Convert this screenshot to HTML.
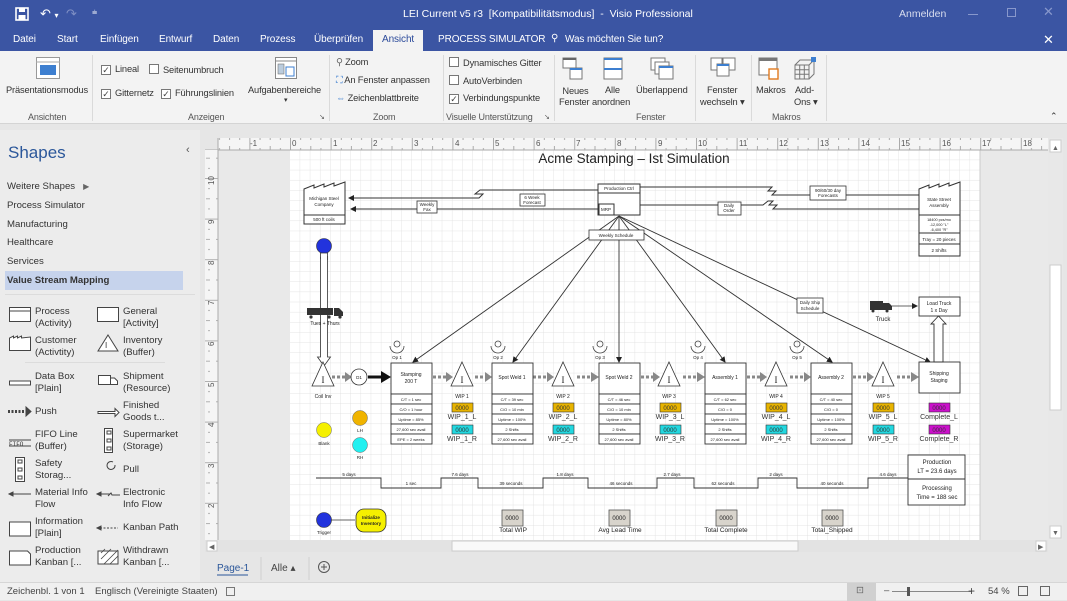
<!DOCTYPE html>
<html><head><meta charset="utf-8">
<style>
*{margin:0;padding:0;box-sizing:border-box}
body{width:1067px;height:600px;overflow:hidden;background:#e6e6e6;font-family:"Liberation Sans",sans-serif;font-size:10px;color:#333;position:relative}
.a{position:absolute;white-space:nowrap}
#title{left:0;top:0;width:1067px;height:30px;background:#3b55a3}
#tabs{left:0;top:30px;width:1067px;height:21px;background:#3b55a3}
#tabs .a{font-size:10px !important;letter-spacing:-0.1px}
.w{color:#fff}
#ribbon{left:0;top:51px;width:1067px;height:73px;background:#f3f3f3;border-bottom:1px solid #d4d4d4;font-size:9.3px;letter-spacing:-0.15px}
.cb{display:inline-block;width:10px;height:10px;border:1px solid #777;background:#fff;vertical-align:-1px;margin-right:4px;font-size:9px;line-height:8px;text-align:center;color:#444}
.sep{position:absolute;top:4px;width:1px;height:66px;background:#dadada}
.gl{color:#555;font-size:9px}
#shapes{left:0;top:130px;width:200px;height:452px;background:#ececec;font-size:9.6px}
#status{left:0;top:582px;width:1067px;height:18px;background:#f0f0f0;border-top:1px solid #d6d6d6}
.si{font-size:9.5px;color:#444}
</style></head><body>
<div class="a" id="title">
 <svg class="a" style="left:15px;top:7px" width="14" height="14"><rect x="1" y="1" width="12" height="12" fill="none" stroke="#fff" stroke-width="1.6"/><rect x="4" y="1" width="6" height="4" fill="#fff"/><rect x="3.5" y="8" width="7" height="5" fill="#fff"/></svg>
 <div class="a w" style="left:40px;top:6px;font-size:13px">↶ <span style="font-size:8px">▾</span></div>
 <div class="a" style="left:66px;top:6px;font-size:13px;color:#7f8fc4">↷</div>
 <div class="a w" style="left:92px;top:7px;font-size:9px">⩧</div>
 <div class="a w" style="left:403px;top:8px;font-size:10.5px">LEI Current v5 r3 &nbsp;[Kompatibilitätsmodus] &nbsp;- &nbsp;Visio Professional</div>
 <div class="a w" style="left:899px;top:8px;font-size:10.5px;color:#d8ddee">Anmelden</div>
 <div class="a" style="left:968px;top:14px;width:10px;height:1px;background:#8898cc"></div>
 <div class="a" style="left:1007px;top:8px;width:9px;height:9px;border:1px solid #8898cc"></div>
 <div class="a" style="left:1043px;top:4px;color:#8898cc;font-size:13px">✕</div>
</div>
<div class="a" id="tabs">
 <div class="a w" style="left:13px;top:4px">Datei</div>
 <div class="a w" style="left:57px;top:4px">Start</div>
 <div class="a w" style="left:100px;top:4px">Einfügen</div>
 <div class="a w" style="left:159px;top:4px">Entwurf</div>
 <div class="a w" style="left:213px;top:4px">Daten</div>
 <div class="a w" style="left:260px;top:4px">Prozess</div>
 <div class="a w" style="left:314px;top:4px">Überprüfen</div>
 <div class="a" style="left:373px;top:0;width:50px;height:21px;background:#f3f3f3;color:#2b4a9a;padding:4px 0 0 9px">Ansicht</div>
 <div class="a w" style="left:438px;top:4px">PROCESS SIMULATOR</div>
 <div class="a w" style="left:551px;top:3px">⚲</div>
 <div class="a w" style="left:565px;top:4px">Was möchten Sie tun?</div>
 <div class="a w" style="left:1043px;top:2px;font-size:13px !important">✕</div>
</div>
<div class="a" id="ribbon">
 <svg class="a" style="left:36px;top:6px" width="24" height="22"><rect x="0.5" y="0.5" width="23" height="21" fill="#fff" stroke="#999"/><line x1="0" y1="5" x2="24" y2="5" stroke="#aaa"/><rect x="4" y="8" width="16" height="10" fill="#3d7fd0"/></svg>
 <div class="a" style="left:6px;top:34px">Präsentationsmodus</div>
 <div class="a gl" style="left:28px;top:61px">Ansichten</div>
 <div class="sep" style="left:92px"></div>
 <div class="a" style="left:101px;top:13px"><span class="cb">✓</span>Lineal</div>
 <div class="a" style="left:149px;top:13px"><span class="cb"></span>Seitenumbruch</div>
 <div class="a" style="left:101px;top:37px"><span class="cb">✓</span>Gitternetz</div>
 <div class="a" style="left:161px;top:37px"><span class="cb">✓</span>Führungslinien</div>
 <svg class="a" style="left:275px;top:6px" width="22" height="22"><rect x="0.5" y="0.5" width="21" height="21" fill="#fff" stroke="#888"/><line x1="0" y1="4" x2="22" y2="4" stroke="#888"/><rect x="3" y="7" width="6" height="10" fill="#bcd" stroke="#777" stroke-width=".6"/><rect x="11" y="10" width="8" height="9" fill="#fff" stroke="#3d7fd0"/></svg>
 <div class="a" style="left:248px;top:34px">Aufgabenbereiche</div>
 <div class="a" style="left:284px;top:45px;font-size:7px">▾</div>
 <div class="a gl" style="left:188px;top:61px">Anzeigen</div>
 <div class="a gl" style="left:319px;top:62px;font-size:7px">↘</div>
 <div class="sep" style="left:329px"></div>
 <div class="a" style="left:336px;top:6px"><span style="color:#666">⚲</span> Zoom</div>
 <div class="a" style="left:336px;top:24px"><span style="color:#3d7fd0">⛶</span> An Fenster anpassen</div>
 <div class="a" style="left:336px;top:42px"><span style="color:#3d7fd0">⇔</span> Zeichenblattbreite</div>
 <div class="a gl" style="left:373px;top:61px">Zoom</div>
 <div class="sep" style="left:443px"></div>
 <div class="a" style="left:449px;top:6px"><span class="cb"></span>Dynamisches Gitter</div>
 <div class="a" style="left:449px;top:24px"><span class="cb"></span>AutoVerbinden</div>
 <div class="a" style="left:449px;top:42px"><span class="cb">✓</span>Verbindungspunkte</div>
 <div class="a gl" style="left:446px;top:61px">Visuelle Unterstützung</div>
 <div class="a gl" style="left:544px;top:62px;font-size:7px">↘</div>
 <div class="sep" style="left:554px"></div>
 <svg class="a" style="left:562px;top:6px" width="22" height="24"><rect x="1" y="1" width="13" height="10" fill="#fff" stroke="#777"/><rect x="1" y="1" width="13" height="2" fill="#666"/><rect x="8" y="11" width="12" height="11" fill="#fff" stroke="#777"/><rect x="8" y="11" width="12" height="2" fill="#3d7fd0"/></svg>
 <div class="a" style="left:560px;top:34px;line-height:12px">&nbsp;Neues</div>
 <div class="a" style="left:559px;top:46px">Fenster</div>
 <svg class="a" style="left:603px;top:6px" width="20" height="24"><rect x="1" y="1" width="18" height="21" fill="#fff" stroke="#777"/><rect x="1" y="1" width="18" height="2" fill="#3d7fd0"/><rect x="1" y="11" width="18" height="2" fill="#3d7fd0"/></svg>
 <div class="a" style="left:605px;top:34px">Alle</div>
 <div class="a" style="left:592px;top:46px">anordnen</div>
 <svg class="a" style="left:650px;top:6px" width="24" height="24"><rect x="1" y="1" width="14" height="12" fill="#fff" stroke="#777"/><rect x="5" y="5" width="14" height="12" fill="#fff" stroke="#777"/><rect x="9" y="9" width="14" height="13" fill="#fff" stroke="#777"/><rect x="9" y="9" width="14" height="2" fill="#3d7fd0"/></svg>
 <div class="a" style="left:636px;top:34px">Überlappend</div>
 <div class="sep" style="left:695px"></div>
 <svg class="a" style="left:710px;top:6px" width="26" height="22"><rect x="1" y="1" width="11" height="12" fill="#fff" stroke="#777"/><rect x="13" y="1" width="12" height="12" fill="#fff" stroke="#777"/><rect x="7" y="7" width="12" height="12" fill="#fff" stroke="#777"/><rect x="7" y="7" width="12" height="2" fill="#3d7fd0"/></svg>
 <div class="a" style="left:707px;top:34px">Fenster</div>
 <div class="a" style="left:700px;top:46px">wechseln ▾</div>
 <div class="a gl" style="left:636px;top:61px">Fenster</div>
 <div class="sep" style="left:751px"></div>
 <svg class="a" style="left:758px;top:6px" width="24" height="24"><rect x="1" y="1" width="18" height="17" fill="#fff" stroke="#777"/><rect x="1" y="1" width="18" height="3" fill="#777"/><rect x="11" y="12" width="9" height="10" fill="#fff" stroke="#e07a20" stroke-width="1.4"/></svg>
 <div class="a" style="left:756px;top:34px">Makros</div>
 <svg class="a" style="left:792px;top:6px" width="24" height="24"><path d="M3 8h14v14H3zM3 8l5-5h14l-5 5M17 22l5-5V3M7.7 8v14M12.3 8v14M3 12.7h14M3 17.3h14" fill="none" stroke="#777"/><rect x="19" y="0" width="5" height="5" fill="#3d7fd0"/></svg>
 <div class="a" style="left:795px;top:34px">Add-</div>
 <div class="a" style="left:794px;top:46px">Ons ▾</div>
 <div class="a gl" style="left:772px;top:61px">Makros</div>
 <div class="sep" style="left:826px"></div>
 <div class="a" style="left:1050px;top:60px;font-size:9px">⌃</div>
</div>

<div class="a" id="shapes">
 <div class="a" style="left:8px;top:13px;font-size:17px;color:#2b579a">Shapes</div>
 <div class="a" style="left:186px;top:14px;font-size:11px;color:#555">‹</div>
 <div class="a" style="left:7px;top:51px">Weitere Shapes &nbsp; <span style="font-size:8px;color:#666">▶</span></div>
 <div class="a" style="left:7px;top:70px">Process Simulator</div>
 <div class="a" style="left:7px;top:89px">Manufacturing</div>
 <div class="a" style="left:7px;top:107px">Healthcare</div>
 <div class="a" style="left:7px;top:126px">Services</div>
 <div class="a" style="left:5px;top:141px;width:178px;height:19px;background:#c6d3ec"></div>
 <div class="a" style="left:7px;top:145px;font-weight:bold;color:#333">Value Stream Mapping</div>
 <div class="a" style="left:5px;top:164px;width:190px;height:1px;background:#dcdcdc"></div>
 <svg class="a" style="left:0;top:170px" width="200" height="275" font-size="9">
  <g fill="#fff" stroke="#444" stroke-width="1">
   <rect x="9.5" y="7.5" width="21" height="14"/><line x1="9.5" y1="11" x2="30.5" y2="11"/>
   <rect x="97.5" y="7.5" width="21" height="14"/>
   <path d="M9.5 50.5V38l4-2v2l4-2v2l4-2v2l9-1v13.5z"/>
   <path d="M108 35l10 16H98z"/>
   <rect x="9.5" y="81" width="21" height="4"/>
   <path d="M98.5 75.5h12v9h-12zM110.5 78h4l3 3v3.5h-7"/>
   <path d="M98 111.5h17v-3l4 4-4 4v-3H98z"/>
   <rect x="104.5" y="128.5" width="8" height="24"/><rect x="107" y="131" width="4" height="3"/><rect x="107" y="139" width="4" height="3"/><rect x="107" y="147" width="4" height="3"/>
   <rect x="15.5" y="157.5" width="9" height="24"/><rect x="18" y="160" width="4" height="3"/><rect x="18" y="168" width="4" height="3"/><rect x="18" y="176" width="4" height="3"/>
   <rect x="9.5" y="222" width="21" height="14"/>
   <path d="M9.5 251h18l3 3v11h-21z"/>
   <rect x="98" y="251" width="20" height="13"/>
  </g>
  <g stroke="#444" fill="#444">
   <path d="M8 111.5h18" stroke-dasharray="2 1.5" stroke-width="3"/><path d="M26 107l5 4.5-5 4.5z"/>
   <line x1="9" y1="140" x2="31" y2="140"/><line x1="9" y1="146" x2="31" y2="146"/>
   <line x1="12" y1="194" x2="31" y2="194"/><path d="M9 194l4-2v4z"/>
   <path d="M100 194h10l-2 2 3-3 1 2h8" fill="none"/><path d="M97 194l4-2v4z"/>
   <path d="M100 228h18" stroke-dasharray="2 1.5"/><path d="M97 228l4-2v4z"/>
   <path d="M101 253l4-4M101 259l10-10M104 264l14-14M110 264l8-8" stroke-width=".8"/>
   <path d="M115 165a4 4 0 1 1 -2 -3" fill="none"/>
  </g>
  <text x="9" y="146" font-size="6" font-family="Liberation Mono" fill="#333">FIFO</text>
  <text x="105" y="48" font-size="8" fill="#333">I</text>
 </svg>
 <div class="a" style="left:35px;top:176px;line-height:12px">Process<br>(Activity)</div>
 <div class="a" style="left:123px;top:176px;line-height:12px">General<br>[Activity]</div>
 <div class="a" style="left:35px;top:205px;line-height:12px">Customer<br>(Activtity)</div>
 <div class="a" style="left:123px;top:205px;line-height:12px">Inventory<br>(Buffer)</div>
 <div class="a" style="left:25px;top:232px;width:140px;height:1px;background:#dcdcdc"></div>
 <div class="a" style="left:35px;top:241px;line-height:12px">Data Box<br>[Plain]</div>
 <div class="a" style="left:123px;top:241px;line-height:12px">Shipment<br>(Resource)</div>
 <div class="a" style="left:35px;top:276px">Push</div>
 <div class="a" style="left:123px;top:270px;line-height:12px">Finished<br>Goods t...</div>
 <div class="a" style="left:35px;top:299px;line-height:12px">FIFO Line<br>(Buffer)</div>
 <div class="a" style="left:123px;top:299px;line-height:12px">Supermarket<br>(Storage)</div>
 <div class="a" style="left:35px;top:328px;line-height:12px">Safety<br>Storag...</div>
 <div class="a" style="left:123px;top:334px">Pull</div>
 <div class="a" style="left:35px;top:357px;line-height:12px">Material Info<br>Flow</div>
 <div class="a" style="left:123px;top:357px;line-height:12px">Electronic<br>Info Flow</div>
 <div class="a" style="left:35px;top:386px;line-height:12px">Information<br>[Plain]</div>
 <div class="a" style="left:123px;top:392px">Kanban Path</div>
 <div class="a" style="left:35px;top:415px;line-height:12px">Production<br>Kanban [...</div>
 <div class="a" style="left:123px;top:415px;line-height:12px">Withdrawn<br>Kanban [...</div>
</div>

<svg class="a" style="left:200px;top:130px" width="867" height="452" viewBox="200 130 867 452" font-family="Liberation Sans, sans-serif">
 <defs>
  <pattern id="g" x="290" y="150" width="10.15" height="10.15" patternUnits="userSpaceOnUse"><path d="M10.15 0V10.15H0" fill="none" stroke="#dcdcdc" stroke-width=".7"/></pattern>
  <pattern id="tx" x="290" y="0" width="40.6" height="10" patternUnits="userSpaceOnUse"><path d="M0.5 0V12M10.65 8V12M20.8 6V12M30.95 8V12" stroke="#999" stroke-width=".8"/></pattern>
  <pattern id="ty" x="0" y="178" width="10" height="40.6" patternUnits="userSpaceOnUse"><path d="M0 0.5H12M8 10.65H12M6 20.8H12M8 30.95H12" stroke="#999" stroke-width=".8"/></pattern>
  <marker id="ah" markerWidth="6" markerHeight="6" refX="5" refY="3" orient="auto" markerUnits="userSpaceOnUse"><path d="M0 0L6 3L0 6z" fill="#222"/></marker>
 </defs>
 <rect x="200" y="130" width="867" height="452" fill="#e6e6e6"/>
 <rect x="218" y="150" width="830" height="390" fill="#e9e9e9"/>
 <rect x="290" y="150" width="690" height="390" fill="#fff"/>
 <rect x="290" y="150" width="690" height="390" fill="url(#g)"/>
 <line x1="980" y1="150" x2="980" y2="540" stroke="#ccc"/>
 <rect x="218" y="138" width="830" height="12" fill="#f5f5f5"/>
 <rect x="218" y="138" width="830" height="12" fill="url(#tx)"/>
 <line x1="205" y1="150" x2="1048" y2="150" stroke="#aaa"/>
 <rect x="205" y="150" width="13" height="390" fill="#f5f5f5"/>
 <rect x="205" y="150" width="13" height="390" fill="url(#ty)"/>
 <line x1="218" y1="138" x2="218" y2="540" stroke="#aaa"/>
 <g font-size="8" fill="#555">
  <text x="250" y="146">-1</text><text x="292" y="146">0</text><text x="333" y="146">1</text><text x="373" y="146">2</text><text x="414" y="146">3</text><text x="455" y="146">4</text><text x="495" y="146">5</text><text x="536" y="146">6</text><text x="576" y="146">7</text><text x="617" y="146">8</text><text x="658" y="146">9</text><text x="698" y="146">10</text><text x="739" y="146">11</text><text x="779" y="146">12</text><text x="820" y="146">13</text><text x="861" y="146">14</text><text x="901" y="146">15</text><text x="942" y="146">16</text><text x="982" y="146">17</text><text x="1023" y="146">18</text>
  <g transform="rotate(-90)"><text x="-185" y="214">10</text><text x="-224" y="214">9</text><text x="-265" y="214">8</text><text x="-305" y="214">7</text><text x="-346" y="214">6</text><text x="-387" y="214">5</text><text x="-427" y="214">4</text><text x="-468" y="214">3</text><text x="-508" y="214">2</text></g>
 </g>
 <rect x="1048" y="138" width="15" height="402" fill="#e8e8e8"/>
 <rect x="1050" y="140" width="11" height="12" fill="#fff" stroke="#ccc"/><text x="1052" y="150" font-size="7" fill="#666">▲</text>
 <rect x="1050" y="265" width="11" height="145" fill="#fff" stroke="#ccc"/>
 <rect x="1050" y="526" width="11" height="12" fill="#fff" stroke="#ccc"/><text x="1052" y="535" font-size="7" fill="#666">▼</text>
 <rect x="205" y="540" width="843" height="12" fill="#e3e3e3"/>
 <rect x="207" y="541" width="10" height="10" fill="#fff" stroke="#ccc"/><text x="209" y="549" font-size="7" fill="#666">◀</text>
 <rect x="452" y="541" width="346" height="10" fill="#f9f9f9" stroke="#ccc"/>
 <rect x="1036" y="541" width="10" height="10" fill="#fff" stroke="#ccc"/><text x="1038" y="549" font-size="7" fill="#666">▶</text>
 <text x="217" y="571" font-size="10" fill="#2b579a">Page-1</text>
 <line x1="217" y1="575" x2="248" y2="575" stroke="#2b579a"/>
 <line x1="261" y1="557" x2="261" y2="580" stroke="#d0d0d0"/>
 <text x="271" y="571" font-size="10" fill="#444">Alle ▴</text>
 <line x1="309" y1="557" x2="309" y2="580" stroke="#d0d0d0"/>
 <circle cx="324" cy="567" r="5.5" fill="none" stroke="#555"/><path d="M321 567h6M324 564v6" stroke="#555"/>

 <g font-size="4.5" fill="#222" text-anchor="middle" stroke-linejoin="miter">
 <text x="634" y="163" font-size="13.5">Acme Stamping – Ist Simulation</text>
 <g fill="none" stroke="#333" stroke-width="1">
  <path d="M304 215V189l10-4v3l10-4v3l10-4v3l11-4v33z" fill="#fff"/>
  <rect x="304" y="215" width="41" height="9" fill="#fff"/>
  <path d="M919 215V189l10-4v3l10-4v3l10-4v3l11-4v33z" fill="#fff"/>
  <rect x="919" y="215" width="41" height="18" fill="#fff"/>
  <rect x="919" y="233" width="41" height="11" fill="#fff"/>
  <rect x="919" y="244" width="41" height="12" fill="#fff"/>
  <rect x="598" y="184" width="42" height="31" fill="#fff"/>
  <line x1="598" y1="193" x2="640" y2="193"/>
  <rect x="599" y="204" width="15" height="11" fill="#fff"/>
  <path d="M598 190H480l-5 4h8l-4 4H349" marker-end="url(#ah)"/>
  <path d="M598 209H351" marker-end="url(#ah)"/>
  <path d="M919 195H772l4-4h-8l4-4H640"/>
  <path d="M919 209H773l4-4h-8l4-4h-5l-5 4H640"/>
 </g>
 <g stroke="#333" stroke-width=".9" fill="none" marker-end="url(#ah)">
  <line x1="619" y1="216" x2="413" y2="362"/>
  <line x1="619" y1="216" x2="513" y2="362"/>
  <line x1="619" y1="216" x2="619" y2="362"/>
  <line x1="619" y1="216" x2="725" y2="362"/>
  <line x1="619" y1="216" x2="832" y2="362"/>
  <line x1="619" y1="216" x2="930" y2="362"/>
 </g>
 <g fill="#fff" stroke="#333" stroke-width=".8">
  <rect x="520" y="194" width="25" height="12"/>
  <rect x="417" y="201" width="20" height="12"/>
  <rect x="810" y="186" width="36" height="14"/>
  <rect x="718" y="202" width="23" height="13"/>
  <rect x="589" y="230" width="55" height="10"/>
  <rect x="797" y="298" width="26" height="15"/>
 </g>
 <text x="532" y="199">6 Week</text><text x="532" y="204">Forecast</text>
 <text x="427" y="206">Weekly</text><text x="427" y="211">Fax</text>
 <text x="828" y="192">90/60/30 day</text><text x="828" y="197">Forecasts</text>
 <text x="729" y="207">Daily</text><text x="729" y="212">Order</text>
 <text x="616" y="237">Weekly Schedule</text>
 <text x="810" y="304">Daily Ship</text><text x="810" y="310">Schedule</text>
 <text x="324" y="200">Michigan Steel</text><text x="324" y="206">Company</text><text x="324" y="221">500 ft coils</text>
 <text x="619" y="190">Production Ctrl</text><text x="606" y="211">MRP</text>
 <text x="939" y="201">State Street</text><text x="939" y="207">Assembly</text>
 <text x="939" y="221" font-size="3.8">18400 pcs/mo</text><text x="939" y="226" font-size="3.8">-12,000 "L"</text><text x="939" y="231" font-size="3.8">-6,400 "R"</text>
 <text x="939" y="241">Tray = 20 pieces</text><text x="939" y="252">2 Shifts</text>

 <circle cx="324" cy="246" r="7.5" fill="#2233dd" stroke="#333" stroke-width=".6"/>
 <text x="324" y="260" font-size="5">Coil</text>
 <path d="M320.5 253V357l-3 0 6.5 9 6.5-9h-3V253z" fill="#fff" stroke="#333" stroke-width=".8"/>
 <g fill="#333"><rect x="307" y="308" width="26" height="7"/><path d="M334 308h5l4 4v4h-9z"/><circle cx="311" cy="317" r="1.6"/><circle cx="329" cy="317" r="1.6"/><circle cx="340" cy="317" r="1.6"/></g>
 <text x="325" y="325" font-size="5">Tues + Thurs</text>

 <g stroke="#888" stroke-width="3" stroke-dasharray="3 2" fill="none">
  <line x1="332" y1="377" x2="346" y2="377"/>
  <line x1="433" y1="377" x2="447" y2="377"/><line x1="475" y1="377" x2="486" y2="377"/>
  <line x1="533" y1="377" x2="548" y2="377"/><line x1="577" y1="377" x2="592" y2="377"/>
  <line x1="641" y1="377" x2="654" y2="377"/><line x1="683" y1="377" x2="698" y2="377"/>
  <line x1="747" y1="377" x2="761" y2="377"/><line x1="790" y1="377" x2="805" y2="377"/>
  <line x1="853" y1="377" x2="868" y2="377"/><line x1="897" y1="377" x2="912" y2="377"/>
 </g>
 <g fill="#888">
  <path d="M345 372l7 5-7 5z"/><path d="M446 372l7 5-7 5z"/><path d="M485 372l7 5-7 5z"/><path d="M547 372l7 5-7 5z"/><path d="M591 372l8 5-8 5z"/><path d="M653 372l7 5-7 5z"/><path d="M697 372l8 5-8 5z"/><path d="M760 372l7 5-7 5z"/><path d="M804 372l7 5-7 5z"/><path d="M867 372l7 5-7 5z"/><path d="M911 372l8 5-8 5z"/>
 </g>
 <line x1="368" y1="377" x2="382" y2="377" stroke="#111" stroke-width="3"/><path d="M381 371l10 6-10 6z" fill="#111"/>
 <circle cx="359" cy="377" r="8" fill="#fff" stroke="#333" stroke-width=".8"/><text x="359" y="379">D1</text>

 <g fill="#fff" stroke="#333" stroke-width=".8">
  <path d="M323 362l11 24h-22z"/><path d="M462 362l11 24h-22z"/><path d="M563 362l11 24h-22z"/><path d="M669 362l11 24h-22z"/><path d="M776 362l11 24h-22z"/><path d="M883 362l11 24h-22z"/>
 </g>
 <g font-size="9" font-family="Liberation Serif"><text x="323" y="383">I</text><text x="462" y="383">I</text><text x="563" y="383">I</text><text x="669" y="383">I</text><text x="776" y="383">I</text><text x="883" y="383">I</text></g>
 <g font-size="5"><text x="323" y="398">Coil Inv</text><text x="462" y="398">WIP 1</text><text x="563" y="398">WIP 2</text><text x="669" y="398">WIP 3</text><text x="776" y="398">WIP 4</text><text x="883" y="398">WIP 5</text></g>

 <g fill="none" stroke="#444" stroke-width=".8">
  <circle cx="397" cy="344" r="3"/><path d="M390 346a7 7 0 0 0 14 0"/>
  <circle cx="498" cy="344" r="3"/><path d="M491 346a7 7 0 0 0 14 0"/>
  <circle cx="600" cy="344" r="3"/><path d="M593 346a7 7 0 0 0 14 0"/>
  <circle cx="698" cy="344" r="3"/><path d="M691 346a7 7 0 0 0 14 0"/>
  <circle cx="797" cy="344" r="3"/><path d="M790 346a7 7 0 0 0 14 0"/>
 </g>
 <text x="397" y="359">Op 1</text><text x="498" y="359">Op 2</text><text x="600" y="359">Op 3</text><text x="698" y="359">Op 4</text><text x="797" y="359">Op 5</text>

 <g fill="#fff" stroke="#333" stroke-width=".9">
  <rect x="391" y="363" width="41" height="31"/><rect x="391" y="394" width="41" height="10"/><rect x="391" y="404" width="41" height="10"/><rect x="391" y="414" width="41" height="10"/><rect x="391" y="424" width="41" height="10"/><rect x="391" y="434" width="41" height="10"/>
  <rect x="492" y="363" width="41" height="31"/><rect x="492" y="394" width="41" height="10"/><rect x="492" y="404" width="41" height="10"/><rect x="492" y="414" width="41" height="10"/><rect x="492" y="424" width="41" height="10"/><rect x="492" y="434" width="41" height="10"/>
  <rect x="599" y="363" width="41" height="31"/><rect x="599" y="394" width="41" height="10"/><rect x="599" y="404" width="41" height="10"/><rect x="599" y="414" width="41" height="10"/><rect x="599" y="424" width="41" height="10"/><rect x="599" y="434" width="41" height="10"/>
  <rect x="705" y="363" width="41" height="31"/><rect x="705" y="394" width="41" height="10"/><rect x="705" y="404" width="41" height="10"/><rect x="705" y="414" width="41" height="10"/><rect x="705" y="424" width="41" height="10"/><rect x="705" y="434" width="41" height="10"/>
  <rect x="811" y="363" width="41" height="31"/><rect x="811" y="394" width="41" height="10"/><rect x="811" y="404" width="41" height="10"/><rect x="811" y="414" width="41" height="10"/><rect x="811" y="424" width="41" height="10"/><rect x="811" y="434" width="41" height="10"/>
  <rect x="919" y="362" width="41" height="31"/>
  <rect x="919" y="297" width="41" height="19"/>
  <path d="M934 362V324h-3l7.5-8 7.5 8h-3V362z"/>
 </g>
 <g font-size="5">
  <text x="411" y="376">Stamping</text><text x="411" y="383">200 T</text>
  <text x="512" y="379">Spot Weld 1</text><text x="619" y="379">Spot Weld 2</text><text x="725" y="379">Assembly 1</text><text x="831" y="379">Assembly 2</text>
  <text x="939" y="375">Shipping</text><text x="939" y="382">Staging</text>
  <text x="939" y="305">Load Truck</text><text x="939" y="312">1 x Day</text>
 </g>
 <g font-size="4">
  <text x="411" y="401">C/T = 1 sec</text><text x="411" y="411">C/O = 1 hour</text><text x="411" y="421">Uptime = 85%</text><text x="411" y="431">27,600 sec avail</text><text x="411" y="441">EPE = 2 weeks</text>
  <text x="512" y="401">C/T = 39 sec</text><text x="512" y="411">C/O = 10 min</text><text x="512" y="421">Uptime = 100%</text><text x="512" y="431">2 Shifts</text><text x="512" y="441">27,600 sec avail</text>
  <text x="619" y="401">C/T = 46 sec</text><text x="619" y="411">C/O = 10 min</text><text x="619" y="421">Uptime = 80%</text><text x="619" y="431">2 Shifts</text><text x="619" y="441">27,600 sec avail</text>
  <text x="725" y="401">C/T = 62 sec</text><text x="725" y="411">C/O = 0</text><text x="725" y="421">Uptime = 100%</text><text x="725" y="431">2 Shifts</text><text x="725" y="441">27,600 sec avail</text>
  <text x="831" y="401">C/T = 40 sec</text><text x="831" y="411">C/O = 0</text><text x="831" y="421">Uptime = 100%</text><text x="831" y="431">2 Shifts</text><text x="831" y="441">27,600 sec avail</text>
 </g>
 <g fill="#333"><rect x="870" y="301" width="13" height="9"/><path d="M883 303h6l3 3v4h-9z"/><circle cx="873" cy="311" r="1.5"/><circle cx="887" cy="311" r="1.5"/></g>
 <line x1="892" y1="306" x2="917" y2="306" stroke="#333" stroke-width=".8" marker-end="url(#ah)"/>
 <text x="883" y="321" font-size="6">Truck</text>

 <g stroke="#333" stroke-width=".6">
  <rect x="452" y="403" width="21" height="9" fill="#e8b400"/><rect x="553" y="403" width="21" height="9" fill="#e8b400"/><rect x="660" y="403" width="21" height="9" fill="#e8b400"/><rect x="766" y="403" width="21" height="9" fill="#e8b400"/><rect x="873" y="403" width="21" height="9" fill="#e8b400"/>
  <rect x="452" y="425" width="21" height="9" fill="#22d8e0"/><rect x="553" y="425" width="21" height="9" fill="#22d8e0"/><rect x="660" y="425" width="21" height="9" fill="#22d8e0"/><rect x="766" y="425" width="21" height="9" fill="#22d8e0"/><rect x="873" y="425" width="21" height="9" fill="#22d8e0"/>
  <rect x="929" y="403" width="21" height="9" fill="#cc10cc"/><rect x="929" y="425" width="21" height="9" fill="#cc10cc"/>
 </g>
 <g font-size="6" fill="#333">
  <text x="462" y="410">0000</text><text x="563" y="410">0000</text><text x="670" y="410">0000</text><text x="776" y="410">0000</text><text x="883" y="410">0000</text><text x="939" y="410">0000</text>
  <text x="462" y="432">0000</text><text x="563" y="432">0000</text><text x="670" y="432">0000</text><text x="776" y="432">0000</text><text x="883" y="432">0000</text><text x="939" y="432">0000</text>
 </g>
 <g font-size="7" fill="#333">
  <text x="462" y="419">WIP_1_L</text><text x="563" y="419">WIP_2_L</text><text x="670" y="419">WIP_3_L</text><text x="776" y="419">WIP_4_L</text><text x="883" y="419">WIP_5_L</text><text x="939" y="419">Complete_L</text>
  <text x="462" y="441">WIP_1_R</text><text x="563" y="441">WIP_2_R</text><text x="670" y="441">WIP_3_R</text><text x="776" y="441">WIP_4_R</text><text x="883" y="441">WIP_5_R</text><text x="939" y="441">Complete_R</text>
 </g>
 <circle cx="324" cy="430" r="7.5" fill="#f5f000" stroke="#666" stroke-width=".5"/><text x="324" y="445" font-size="4.5">Blank</text>
 <circle cx="360" cy="418" r="7.5" fill="#f0b400" stroke="#666" stroke-width=".5"/><text x="360" y="432" font-size="4.5">LH</text>
 <circle cx="360" cy="445" r="7.5" fill="#22f0f0" stroke="#666" stroke-width=".5"/><text x="360" y="459" font-size="4.5">RH</text>

 <path d="M316 478H381V488H441V478H478V488H543V478H588V488H657V478H694V488H758V478H797V488H868V478H908" fill="none" stroke="#333" stroke-width=".9"/>
 <g font-size="4.5">
  <text x="349" y="476">5 days</text><text x="460" y="476">7.6 days</text><text x="565" y="476">1.8 days</text><text x="672" y="476">2.7 days</text><text x="776" y="476">2 days</text><text x="888" y="476">4.6 days</text>
  <text x="411" y="485">1 sec</text><text x="511" y="485">39 seconds</text><text x="621" y="485">46 seconds</text><text x="723" y="485">62 seconds</text><text x="832" y="485">40 seconds</text>
 </g>
 <rect x="908" y="455" width="57" height="50" fill="#fff" stroke="#333" stroke-width=".9"/><line x1="908" y1="479" x2="965" y2="479" stroke="#333" stroke-width=".9"/>
 <g font-size="6"><text x="937" y="464">Production</text><text x="937" y="473">LT = 23.6 days</text><text x="937" y="490">Processing</text><text x="937" y="499">Time = 188 sec</text></g>

 <circle cx="324" cy="520" r="7.5" fill="#2233dd" stroke="#333" stroke-width=".6"/><text x="324" y="534" font-size="4.5">Trigger</text>
 <line x1="331" y1="520" x2="355" y2="520" stroke="#333" stroke-width=".8"/>
 <rect x="356" y="509" width="30" height="23" rx="8" fill="#f5f000" stroke="#333" stroke-width=".8"/>
 <g font-size="4.5" font-weight="bold"><text x="371" y="519">Initialize</text><text x="371" y="525">Inventory</text></g>
 <g fill="#d8d4cc" stroke="#555" stroke-width=".8"><rect x="502" y="510" width="21" height="16"/><rect x="609" y="510" width="21" height="16"/><rect x="716" y="510" width="21" height="16"/><rect x="822" y="510" width="21" height="16"/></g>
 <g font-size="6"><text x="512" y="520">0000</text><text x="619" y="520">0000</text><text x="726" y="520">0000</text><text x="832" y="520">0000</text></g>
 <g font-size="6.5"><text x="513" y="532">Total WIP</text><text x="620" y="532">Avg Lead Time</text><text x="726" y="532">Total Complete</text><text x="832" y="532">Total_Shipped</text></g>
 </g>
</svg>

<div class="a" id="status">
 <div class="a si" style="left:7px;top:3px">Zeichenbl. 1 von 1</div>
 <div class="a si" style="left:95px;top:3px">Englisch (Vereinigte Staaten)</div>
 <div class="a" style="left:226px;top:4px;width:9px;height:9px;border:1px solid #777"></div>
 <div class="a" style="left:847px;top:0;width:29px;height:18px;background:#d0d0d0"></div>
 <div class="a si" style="left:856px;top:2px;color:#666">⊡</div>
 <div class="a si" style="left:884px;top:2px">–</div>
 <div class="a" style="left:892px;top:8px;width:80px;height:1px;background:#888"></div>
 <div class="a" style="left:907px;top:4px;width:3px;height:9px;background:#555"></div>
 <div class="a si" style="left:968px;top:1px;font-size:12px">+</div>
 <div class="a si" style="left:988px;top:3px">54 %</div>
 <div class="a" style="left:1018px;top:3px;width:10px;height:10px;border:1px solid #666"></div>
 <div class="a" style="left:1040px;top:3px;width:10px;height:10px;border:1px solid #666"></div>
</div>
</body></html>
